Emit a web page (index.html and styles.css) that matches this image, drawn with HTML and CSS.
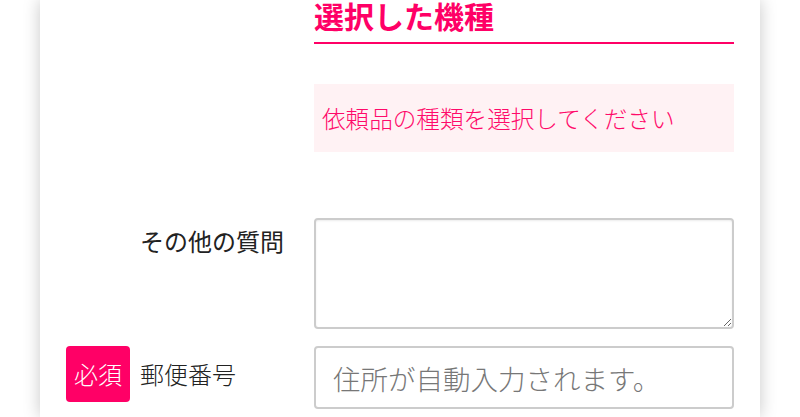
FILE: index.html
```html
<!DOCTYPE html>
<html lang="ja">
<head>
<meta charset="utf-8">
<title>依頼フォーム</title>
<link rel="stylesheet" href="styles.css">
</head>
<body>
<main class="card">
  <section class="selected">
    <div class="spacer"></div>
    <div class="selected-body">
      <h2 class="selected-title">選択した機種</h2>
      <p class="notice">依頼品の種類を選択してください</p>
    </div>
  </section>
  <div class="form-row row-question">
    <label class="label label-right" for="q">その他の質問</label>
    <textarea id="q" class="textarea"></textarea>
  </div>
  <div class="form-row row-zip">
    <div class="label label-left">
      <span class="badge">必須</span>
      <span class="label-text">郵便番号</span>
    </div>
    <input class="input" type="text" placeholder="住所が自動入力されます。">
  </div>
</main>
</body>
</html>
```

FILE: styles.css
```css
html, body {
  margin: 0;
  padding: 0;
  background: #ffffff;
  overflow: hidden;
}
body {
  font-family: "Noto Sans CJK JP", "Noto Sans", sans-serif;
  color: #222;
}
.card {
  width: 720px;
  margin: 0 auto;
  height: 417px;
  box-sizing: border-box;
  background: #fff;
  box-shadow: 0 0 16px rgba(0, 0, 0, 0.22);
  padding: 0 26px;
}
.selected,
.form-row {
  display: grid;
  grid-template-columns: 1fr 420px;
  column-gap: 30px;
}
.selected-title {
  margin: 0;
  font-size: 30px;
  font-weight: 700;
  line-height: 31px;
  color: #ff0066;
  padding-bottom: 11px;
  border-bottom: 2px solid #ff0066;
}
.notice {
  margin: 40px 0 0;
  background: #fff2f4;
  color: #ff0a6a;
  font-size: 23.6px;
  line-height: 36px;
  padding: 16px 8px;
  font-weight: 300;
  white-space: nowrap;
}
.row-question {
  margin-top: 66px;
}
.label {
  font-size: 24px;
  line-height: 36px;
}
.label-right {
  text-align: right;
  padding-top: 5px;
  white-space: nowrap;
}
.textarea {
  display: block;
  width: 420px;
  height: 111px;
  box-sizing: border-box;
  border: 2px solid #cccccc;
  border-radius: 4px;
  box-shadow: inset 0 1px 2px rgba(0, 0, 0, 0.08);
  resize: vertical;
  font-family: inherit;
  margin: 0;
}
.row-zip {
  margin-top: 17px;
}
.label-left {
  display: flex;
  align-items: center;
  height: 56px;
  white-space: nowrap;
}
.badge {
  display: flex;
  align-items: center;
  justify-content: center;
  width: 64px;
  height: 56px;
  background: #ff0066;
  color: #fff;
  border-radius: 4px;
  font-size: 24px;
  font-weight: 300;
}
.label-text {
  margin-left: 10px;
  font-weight: 300;
}
.input {
  display: block;
  width: 420px;
  height: 63px;
  box-sizing: border-box;
  border: 2px solid #cccccc;
  border-radius: 4px;
  padding: 0 17px;
  font-family: inherit;
  font-size: 27.5px;
  margin: 0;
}
.input::placeholder {
  color: #777;
  font-weight: 300;
}
```
